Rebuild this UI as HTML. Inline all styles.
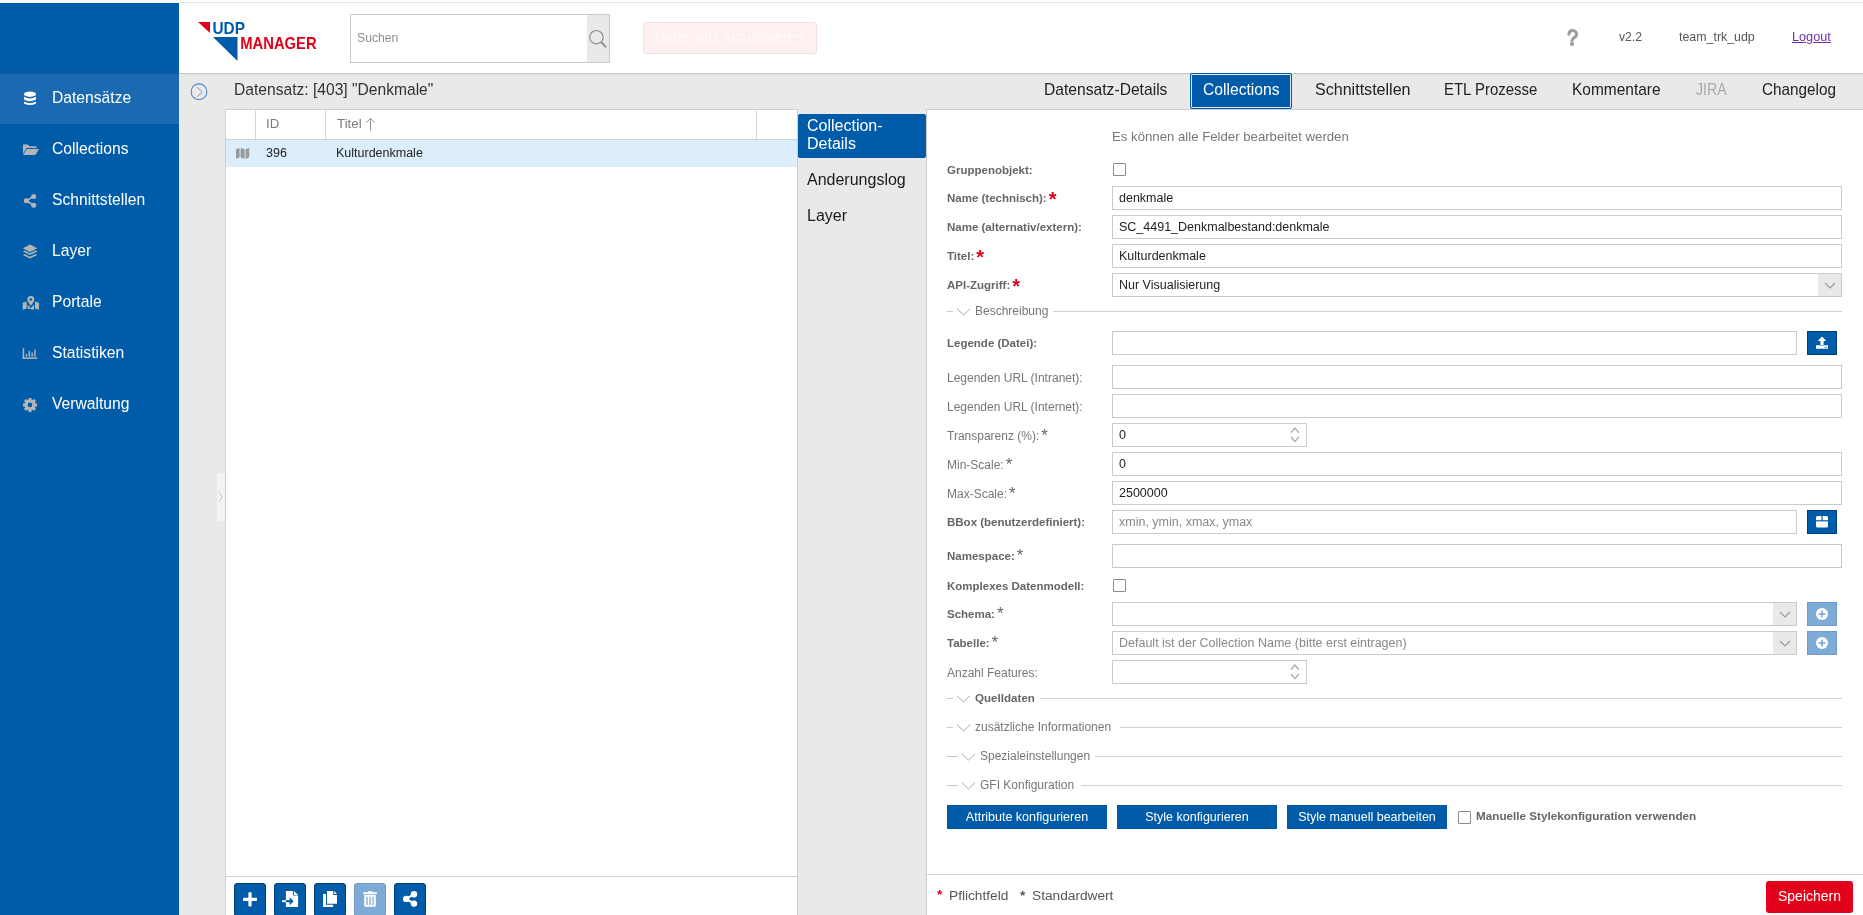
<!DOCTYPE html>
<html><head><meta charset="utf-8">
<style>
*{box-sizing:border-box}
html,body{margin:0;padding:0}
html{background:#fff}body{will-change:transform;width:1863px;height:915px;overflow:hidden;position:relative;background:transparent;font-family:"Liberation Sans",sans-serif;color:#333}
.a{position:absolute}
#topstrip{left:0;top:0;width:1863px;height:2px;background:#fbfbfb}
#topline{left:179px;top:2px;width:1684px;height:1px;background:#e3e3e3}
#sidebar{left:0;top:3px;width:179px;height:912px;background:#005ca9}
.navact{left:0;top:73px;width:179px;height:51px;background:#1b69b0;border-top:1px solid #175c9e}
.nav{left:52px;color:#fff;font-size:17.4px;line-height:20px;transform:scaleX(0.9);transform-origin:0 50%;white-space:nowrap}
.nico{left:22px;width:16px;height:16px}
#header{left:179px;top:3px;width:1684px;height:70px;background:#fff}
#hline{left:179px;top:73px;width:1684px;height:1px;background:#c6c6c6}
#gray{left:179px;top:74px;width:1684px;height:841px;background:#e9e9e9}
#tbl{left:225px;top:109px;width:573px;height:806px;background:#fff;border:1px solid #cfcfcf;border-bottom:none}
#sub{left:798px;top:109px;width:128px;height:806px;background:#e9e9e9}
#form{left:926px;top:109px;width:937px;height:806px;background:#fff;border:1px solid #cfcfcf;border-right:none;border-bottom:none}

.t{position:absolute;white-space:nowrap}
#search{left:350px;top:14px;width:260px;height:49px;border:1px solid #c8c8c8;background:#fff}
#sbtn{left:587px;top:15px;width:22px;height:47px;background:#e9e9e9}
#upd{left:643px;top:22px;width:174px;height:32px;background:#feeff0;border:1px solid #f1e1e3;border-radius:3px}
.tab{font-size:17px;color:#222;top:80px;line-height:20px;transform-origin:0 50%}
#acttab{left:1190px;top:73px;width:102px;height:36px;background:#005ca9;border:1px solid #005ca9;box-shadow:inset 0 0 0 1px #d8e6f3;border-radius:2px}

.th{font-size:13.3px;color:#7c7c7c;top:116px;line-height:16px}
.td{font-size:12.5px;color:#222;top:146px;line-height:15px}
.subi{left:807px;font-size:16px;color:#1a1a1a;line-height:18px}

.lb{font-size:11.5px;font-weight:700;color:#666;line-height:24px;top:0}
.ln{font-size:12px;color:#777;line-height:24px;margin-top:1px}
.sr{color:#e2001a;font-size:20px;font-weight:700;position:relative;top:4px;margin-left:2px;line-height:10px}
.sg{color:#666;font-size:17px;font-weight:400;position:relative;top:1px;margin-left:2px;line-height:10px}
.it{font-size:12.5px;color:#222;line-height:24px}
.ph{color:#888}
.info{font-size:13.2px;color:#777;line-height:16px}
.sec{font-size:12px;color:#777;line-height:16px}
.secb{font-weight:700;font-size:11.6px;color:#666}
.btn{width:160px;height:24px;background:#005ca9;color:#fff;font-size:12.5px;line-height:24px;text-align:center;white-space:nowrap}
.foot{font-size:13.7px;color:#555;line-height:18px}
.tb{top:883px;width:32px;height:34px;background:#005ca9;border-radius:3px;border:1px solid #003f7e}
</style></head>
<body>
<div class="a" id="topstrip"></div>
<div class="a" id="topline"></div>
<div class="a" id="sidebar"></div>
<div class="a navact"></div>
<div class="a nav" style="top:87px">Datensätze</div>
<div class="a nav" style="top:138px">Collections</div>
<div class="a nav" style="top:189px">Schnittstellen</div>
<div class="a nav" style="top:240px">Layer</div>
<div class="a nav" style="top:291px">Portale</div>
<div class="a nav" style="top:342px">Statistiken</div>
<div class="a nav" style="top:393px">Verwaltung</div>

<!--ICONS-->
<svg class="a" style="left:0;top:0" width="179" height="420">
<g fill="#fff">
<ellipse cx="30" cy="94.2" rx="6" ry="2.7"/>
<path d="M24,96.8 Q30,100.2 36,96.8 L36,99.6 Q30,103 24,99.6 Z"/>
<path d="M24,101.6 Q30,105 36,101.6 L36,103.4 Q30,106.8 24,103.4 Z"/>
</g>
<g fill="#b5b5b5">
<path d="M23,144.5 L27.8,144.5 L29.3,146.2 L36.5,146.2 L36.5,148 L26.5,148 L23,154 Z"/>
<path d="M26.8,149 L39,149 L35.4,155 L23.2,155 Z"/>
<circle cx="33.7" cy="196.4" r="2.5"/><circle cx="26.3" cy="200.8" r="2.5"/><circle cx="33.7" cy="205.3" r="2.5"/>
<path d="M33.7,196.4 L26.3,200.8 L33.7,205.3" fill="none" stroke="#b5b5b5" stroke-width="1.6"/>
<path d="M30,244.4 L37.3,248.2 L30,252 L22.8,248.2 Z"/>
<path d="M22.8,251.4 L24.6,250.5 L30,253.3 L35.5,250.5 L37.3,251.4 L30,255.1 Z"/>
<path d="M22.8,254.9 L24.6,254 L30,256.8 L35.5,254 L37.3,254.9 L30,258.6 Z"/>
<path d="M22.7,302.8 L26.6,301.4 L26.6,308.5 L22.7,309.8 Z"/>
<path d="M27.6,304.6 L30.8,308.2 L34,304.6 L34,309.8 L27.6,308.5 Z"/>
<path d="M35,301.4 L39,302.8 L39,309.8 L35,308.5 Z"/>
<path d="M30.8,296 A3.5,3.5 0 0 1 34.3,299.5 C34.3,301.6 31.8,304.2 30.8,306 C29.8,304.2 27.3,301.6 27.3,299.5 A3.5,3.5 0 0 1 30.8,296 Z"/>
<rect x="22.7" y="348.2" width="1.5" height="10.7"/><rect x="22.7" y="357.4" width="14.5" height="1.5"/>
<rect x="25.8" y="354" width="1.5" height="2.6"/><rect x="28.6" y="350.8" width="1.5" height="5.8"/><rect x="31.4" y="352.6" width="1.5" height="4"/><rect x="34.2" y="349.6" width="1.5" height="7"/>
<g transform="translate(30,404.9)">
<circle r="5.3"/>
<rect x="-1.6" y="-7" width="3.2" height="14" rx="0.6"/>
<rect x="-1.6" y="-7" width="3.2" height="14" rx="0.6" transform="rotate(45)"/>
<rect x="-1.6" y="-7" width="3.2" height="14" rx="0.6" transform="rotate(90)"/>
<rect x="-1.6" y="-7" width="3.2" height="14" rx="0.6" transform="rotate(135)"/>
</g>
</g>
<circle cx="30.8" cy="299.5" r="1.3" fill="#005ca9"/>
<circle cx="30" cy="404.9" r="2.3" fill="#005ca9"/>
</svg>

<!--/ICONS-->
<div class="a" id="header"></div>
<div class="a" id="hline"></div>
<div class="a" id="gray"></div>
<div class="a" style="left:179px;top:74px;width:1684px;height:2px;background:linear-gradient(#e2e2e2,#e8e8e8)"></div>

<svg class="a" style="left:0;top:0" width="330" height="70">
<polygon points="198,22 210,22 210,33" fill="#e2001a"/>
<polygon points="213,37 237.5,37 237.5,61" fill="#005ca9"/>
<text x="212.5" y="34.3" font-family="Liberation Sans" font-weight="700" font-size="16.6" fill="#005ca9" textLength="32.5" lengthAdjust="spacingAndGlyphs">UDP</text>
<text x="240.2" y="49.3" font-family="Liberation Sans" font-weight="700" font-size="16.6" fill="#e2001a" textLength="76.5" lengthAdjust="spacingAndGlyphs">MANAGER</text>
</svg>
<div class="a" id="search"></div>
<div class="a" id="sbtn"></div>
<svg class="a" style="left:585px;top:26px" width="26" height="26"><circle cx="11.4" cy="11.2" r="6.7" fill="none" stroke="#8e8e8e" stroke-width="1.2"/><line x1="16.2" y1="16" x2="21.2" y2="21.3" stroke="#8e8e8e" stroke-width="1.9"/></svg>
<div class="t" style="left:357px;top:31px;font-size:12.2px;color:#8f8f8f;line-height:14px">Suchen</div>
<div class="a" id="upd"></div>
<div class="t" style="left:655px;top:29px;font-size:14.3px;color:#fffafa;line-height:16px">Datensatz aktualisieren</div>
<svg class="a" style="left:1564px;top:28px" width="16" height="20"><path d="M4.8,6.2 C5.2,3.6 6.8,2.4 8.4,2.4 C11,2.4 12.6,4.2 12.6,6.2 C12.6,9.3 8.4,9.6 8,12.6" fill="none" stroke="#9c9c9c" stroke-width="3" stroke-linecap="round"/><circle cx="8" cy="16" r="2.1" fill="#9c9c9c"/></svg>
<div class="t" style="left:1619px;top:30px;font-size:12.2px;color:#555;line-height:14px">v2.2</div>
<div class="t" style="left:1679px;top:30px;font-size:12.4px;color:#555;line-height:14px">team_trk_udp</div>
<div class="t" style="left:1792px;top:30px;font-size:12.7px;color:#6b2fa6;line-height:14px;text-decoration:underline">Logout</div>

<svg class="a" style="left:189px;top:82px" width="20" height="20"><circle cx="10" cy="9.8" r="7.9" fill="none" stroke="#4f89c4" stroke-width="1.1"/><polyline points="8.2,5.2 13.3,10 8.2,14.7" fill="none" stroke="#6a8fd8" stroke-width="0.9"/></svg>
<div class="t" style="left:234px;top:80px;font-size:16.8px;color:#333;line-height:20px;transform:scaleX(0.93);transform-origin:0 50%">Datensatz: [403] "Denkmale"</div>
<div class="t tab" style="left:1044px;transform:scaleX(0.92)">Datensatz-Details</div>
<div class="a" id="acttab"></div>
<div class="t tab" style="left:1203px;color:#fff;transform:scaleX(0.92)">Collections</div>
<div class="t tab" style="left:1315px;transform:scaleX(0.945)">Schnittstellen</div>
<div class="t tab" style="left:1444px;transform:scaleX(0.88)">ETL Prozesse</div>
<div class="t tab" style="left:1572px;transform:scaleX(0.91)">Kommentare</div>
<div class="t tab" style="left:1696px;color:#aaa;transform:scaleX(0.83)">JIRA</div>
<div class="t tab" style="left:1762px;transform:scaleX(0.9)">Changelog</div>
<div class="a" id="tbl"></div>
<div class="a" style="left:226px;top:139px;width:571px;height:1px;background:#d0d0d0"></div>
<div class="a" style="left:255px;top:110px;width:1px;height:29px;background:#d8d8d8"></div>
<div class="a" style="left:325px;top:110px;width:1px;height:29px;background:#d8d8d8"></div>
<div class="a" style="left:756px;top:110px;width:1px;height:29px;background:#d8d8d8"></div>
<div class="t th" style="left:266px">ID</div>
<div class="t th" style="left:337px">Titel</div>
<svg class="a" style="left:364px;top:115px" width="12" height="18"><line x1="6.5" y1="3.5" x2="6.5" y2="15.5" stroke="#8a8a8a" stroke-width="0.9"/><polyline points="2.2,7.8 6.5,3.3 10.8,7.8" fill="none" stroke="#8a8a8a" stroke-width="0.9"/></svg>
<div class="a" style="left:226px;top:140px;width:571px;height:27px;background:#dcedfc"></div>
<svg class="a" style="left:235px;top:147px" width="16" height="13"><path d="M1,2.2 L4.6,1 L4.6,10.6 L1,11.8 Z M5.6,1 L9.6,2.2 L9.6,11.8 L5.6,10.6 Z M10.6,2.2 L14.2,1 L14.2,10.6 L10.6,11.8 Z" fill="#9a9a9a"/></svg>
<div class="t td" style="left:266px">396</div>
<div class="t td" style="left:336px">Kulturdenkmale</div>
<div class="a" style="left:226px;top:876px;width:571px;height:1px;background:#d0d0d0"></div>

<!--TOOL-->
<div class="a" style="left:217px;top:473px;width:8px;height:48px;background:#f3f3f3"></div>
<svg class="a" style="left:217px;top:490px" width="8" height="14"><polyline points="2,2.5 5.5,7 2,11.5" fill="none" stroke="#c8c8c8" stroke-width="1"/></svg>
<div class="a tb" style="left:234px"></div>
<div class="a tb" style="left:274px"></div>
<div class="a tb" style="left:314px"></div>
<div class="a tb" style="left:354px;background:#7eaad6;border-color:#6e9bcb"></div>
<div class="a tb" style="left:394px"></div>
<svg class="a" style="left:226px;top:876px" width="220" height="39">
<g fill="#fff">
<rect x="17" y="21.8" width="14" height="3.2" rx="0.8"/><rect x="22.4" y="16.2" width="3.2" height="14.2" rx="0.8"/>
<path d="M59.9,14.9 H66.9 V19.5 H72.1 V31 H59.9 Z"/>
<path d="M67.9,14.9 L72.1,18.9 H67.9 Z"/>
<rect x="56" y="24.2" width="4" height="2"/>
</g>
<g fill="#005ca9">
<rect x="59.9" y="24.2" width="4.2" height="2"/>
<path d="M63.6,21.2 L67.6,25.2 L63.6,29.2 Z"/>
</g>
<g fill="#fff">
<path d="M101,14.9 H107.2 V19 H111 V27.8 H101 Z"/>
<path d="M108.1,14.9 L111,18 H108.1 Z"/>
<path d="M97,18 H100 V28.8 H107.1 V31 H97 Z"/>
<rect x="136.9" y="16.2" width="14.2" height="1.9" rx="0.8"/><rect x="141.8" y="15.2" width="4.6" height="1.6" rx="0.6"/>
<path d="M138.2,18.8 H149.8 V29.6 Q149.8,30.8 148.6,30.8 H139.4 Q138.2,30.8 138.2,29.6 Z"/>
<circle cx="188" cy="18.2" r="3.2"/><circle cx="180.2" cy="22.9" r="3.2"/><circle cx="188" cy="27.6" r="3.2"/>
<path d="M188,18.2 L180.2,22.9 L188,27.6" fill="none" stroke="#fff" stroke-width="2"/>
</g>
<g fill="#7eaad6"><rect x="140.4" y="20.8" width="1.3" height="8.2"/><rect x="143.4" y="20.8" width="1.3" height="8.2"/><rect x="146.4" y="20.8" width="1.3" height="8.2"/></g>
</svg>

<!--/TOOL-->
<div class="a" id="sub"></div>

<div class="a" style="left:798px;top:114px;width:128px;height:44px;background:#005ca9;border-radius:2px"></div>
<div class="t subi" style="top:117px;color:#fff">Collection-</div>
<div class="t subi" style="top:135px;color:#fff">Details</div>
<div class="t subi" style="top:171px">Anderungslog</div>
<div class="t subi" style="top:207px">Layer</div>

<div class="a" id="form"></div>
<!--FORM-->
<div class="t info" style="left:1112px;top:129px;">Es können alle Felder bearbeitet werden</div>
<div class="t lb" style="left:947px;top:158px;">Gruppenobjekt:</div>
<div class="a" style="left:1113px;top:163px;width:13px;height:13px;border:1px solid #8a8a8a;background:#fff;border-radius:1px"></div>
<div class="t lb" style="left:947px;top:186px;">Name (technisch):<span class="sr">*</span></div>
<div class="a" style="left:1112px;top:186px;width:730px;height:24px;border:1px solid #cbcbcb;background:#fff"></div>
<div class="t it" style="left:1119px;top:186px;">denkmale</div>
<div class="t lb" style="left:947px;top:215px;">Name (alternativ/extern):</div>
<div class="a" style="left:1112px;top:215px;width:730px;height:24px;border:1px solid #cbcbcb;background:#fff"></div>
<div class="t it" style="left:1119px;top:215px;">SC_4491_Denkmalbestand:denkmale</div>
<div class="t lb" style="left:947px;top:244px;">Titel:<span class="sr">*</span></div>
<div class="a" style="left:1112px;top:244px;width:730px;height:24px;border:1px solid #cbcbcb;background:#fff"></div>
<div class="t it" style="left:1119px;top:244px;">Kulturdenkmale</div>
<div class="t lb" style="left:947px;top:273px;">API-Zugriff:<span class="sr">*</span></div>
<div class="a" style="left:1112px;top:273px;width:730px;height:24px;border:1px solid #cbcbcb;background:#fff"></div>
<div class="t it" style="left:1119px;top:273px;">Nur Visualisierung</div>
<div class="a" style="left:1818px;top:274px;width:23px;height:22px;background:#e9e9e9"></div>
<svg class="a" style="left:1822.5px;top:278px" width="14" height="14"><polyline points="2,5 7,10 12,5" fill="none" stroke="#999" stroke-width="1.1"/></svg>
<div class="a" style="left:947px;top:311px;width:6px;height:1px;background:#c9c9c9"></div>
<svg class="a" style="left:956px;top:306px" width="16" height="10"><polyline points="1,2.7 7.5,9 14,2.7" fill="none" stroke="#a8a8a8" stroke-width="1"/></svg>
<div class="t sec" style="left:975px;top:303px;">Beschreibung</div>
<div class="a" style="left:1053px;top:311px;width:789px;height:1px;background:#d2d2d2"></div>
<div class="t lb" style="left:947px;top:331px;">Legende (Datei):</div>
<div class="a" style="left:1112px;top:331px;width:685px;height:24px;border:1px solid #cbcbcb;background:#fff"></div>
<div class="a" style="left:1807px;top:331px;width:30px;height:24px;background:#005ca9;border:1px solid #003f7e"></div>
<svg class="a" style="left:1807px;top:331px" width="30" height="24"><path d="M15,5.5 L10.8,10 L13.4,10 L13.4,14.5 L16.6,14.5 L16.6,10 L19.2,10 Z" fill="#fff"/><path d="M9,14.2 L13,14.2 Q15,16 17,14.2 L21,14.2 L21,17.8 L9,17.8 Z" fill="#fff"/><rect x="17.5" y="16" width="1" height="1" fill="#5b8fc8"/><rect x="19" y="16" width="1" height="1" fill="#5b8fc8"/></svg>
<div class="t ln" style="left:947px;top:365px;">Legenden URL (Intranet):</div>
<div class="a" style="left:1112px;top:365px;width:730px;height:24px;border:1px solid #cbcbcb;background:#fff"></div>
<div class="t ln" style="left:947px;top:394px;">Legenden URL (Internet):</div>
<div class="a" style="left:1112px;top:394px;width:730px;height:24px;border:1px solid #cbcbcb;background:#fff"></div>
<div class="t ln" style="left:947px;top:423px;">Transparenz (%):<span class="sg">*</span></div>
<div class="a" style="left:1112px;top:423px;width:195px;height:24px;border:1px solid #cbcbcb;background:#fff"></div>
<div class="t it" style="left:1119px;top:423px;">0</div>
<svg class="a" style="left:1288px;top:425px" width="14" height="20"><polyline points="3,7.7 6.9,3.1 10.8,7.7" fill="none" stroke="#a8a8a8" stroke-width="1.3"/><polyline points="3,12 6.9,16.6 10.8,12" fill="none" stroke="#a8a8a8" stroke-width="1.3"/></svg>
<div class="t ln" style="left:947px;top:452px;">Min-Scale:<span class="sg">*</span></div>
<div class="a" style="left:1112px;top:452px;width:730px;height:24px;border:1px solid #cbcbcb;background:#fff"></div>
<div class="t it" style="left:1119px;top:452px;">0</div>
<div class="t ln" style="left:947px;top:481px;">Max-Scale:<span class="sg">*</span></div>
<div class="a" style="left:1112px;top:481px;width:730px;height:24px;border:1px solid #cbcbcb;background:#fff"></div>
<div class="t it" style="left:1119px;top:481px;">2500000</div>
<div class="t lb" style="left:947px;top:510px;">BBox (benutzerdefiniert):</div>
<div class="a" style="left:1112px;top:510px;width:685px;height:24px;border:1px solid #cbcbcb;background:#fff"></div>
<div class="t it ph" style="left:1119px;top:510px;">xmin, ymin, xmax, ymax</div>
<div class="a" style="left:1807px;top:510px;width:30px;height:24px;background:#005ca9;border:1px solid #003f7e"></div>
<svg class="a" style="left:1807px;top:510px" width="30" height="24"><rect x="9" y="6" width="12" height="11.5" rx="1.5" fill="#fff"/><rect x="9" y="10.2" width="12" height="1.2" fill="#005ca9"/><rect x="14.4" y="5.5" width="1.2" height="4.8" fill="#005ca9"/></svg>
<div class="t lb" style="left:947px;top:544px;">Namespace:<span class="sg">*</span></div>
<div class="a" style="left:1112px;top:544px;width:730px;height:24px;border:1px solid #cbcbcb;background:#fff"></div>
<div class="t lb" style="left:947px;top:574px;">Komplexes Datenmodell:</div>
<div class="a" style="left:1113px;top:579px;width:13px;height:13px;border:1px solid #8a8a8a;background:#fff;border-radius:1px"></div>
<div class="t lb" style="left:947px;top:602px;">Schema:<span class="sg">*</span></div>
<div class="a" style="left:1112px;top:602px;width:685px;height:24px;border:1px solid #cbcbcb;background:#fff"></div>
<div class="a" style="left:1773px;top:603px;width:23px;height:22px;background:#e9e9e9"></div>
<svg class="a" style="left:1777.5px;top:607px" width="14" height="14"><polyline points="2,5 7,10 12,5" fill="none" stroke="#999" stroke-width="1.1"/></svg>
<div class="a" style="left:1807px;top:602px;width:30px;height:24px;background:#7eaad6;border:1px solid #6e9bcb"></div>
<svg class="a" style="left:1807px;top:602px" width="30" height="24"><circle cx="15" cy="12" r="6" fill="#fff"/><rect x="11.6" y="11.2" width="6.8" height="1.7" fill="#7eaad6"/><rect x="14.15" y="8.6" width="1.7" height="6.8" fill="#7eaad6"/></svg>
<div class="t lb" style="left:947px;top:631px;">Tabelle:<span class="sg">*</span></div>
<div class="a" style="left:1112px;top:631px;width:685px;height:24px;border:1px solid #cbcbcb;background:#fff"></div>
<div class="t it ph" style="left:1119px;top:631px;">Default ist der Collection Name (bitte erst eintragen)</div>
<div class="a" style="left:1773px;top:632px;width:23px;height:22px;background:#e9e9e9"></div>
<svg class="a" style="left:1777.5px;top:636px" width="14" height="14"><polyline points="2,5 7,10 12,5" fill="none" stroke="#999" stroke-width="1.1"/></svg>
<div class="a" style="left:1807px;top:631px;width:30px;height:24px;background:#7eaad6;border:1px solid #6e9bcb"></div>
<svg class="a" style="left:1807px;top:631px" width="30" height="24"><circle cx="15" cy="12" r="6" fill="#fff"/><rect x="11.6" y="11.2" width="6.8" height="1.7" fill="#7eaad6"/><rect x="14.15" y="8.6" width="1.7" height="6.8" fill="#7eaad6"/></svg>
<div class="t ln" style="left:947px;top:660px;">Anzahl Features:</div>
<div class="a" style="left:1112px;top:660px;width:195px;height:24px;border:1px solid #cbcbcb;background:#fff"></div>
<svg class="a" style="left:1288px;top:662px" width="14" height="20"><polyline points="3,7.7 6.9,3.1 10.8,7.7" fill="none" stroke="#a8a8a8" stroke-width="1.3"/><polyline points="3,12 6.9,16.6 10.8,12" fill="none" stroke="#a8a8a8" stroke-width="1.3"/></svg>
<div class="a" style="left:947px;top:698px;width:6px;height:1px;background:#c9c9c9"></div>
<svg class="a" style="left:956px;top:693px" width="16" height="10"><polyline points="1,2.7 7.5,9 14,2.7" fill="none" stroke="#a8a8a8" stroke-width="1"/></svg>
<div class="t sec secb" style="left:975px;top:690px;">Quelldaten</div>
<div class="a" style="left:1040px;top:698px;width:802px;height:1px;background:#d2d2d2"></div>
<div class="a" style="left:947px;top:727px;width:6px;height:1px;background:#c9c9c9"></div>
<svg class="a" style="left:956px;top:722px" width="16" height="10"><polyline points="1,2.7 7.5,9 14,2.7" fill="none" stroke="#a8a8a8" stroke-width="1"/></svg>
<div class="t sec" style="left:975px;top:719px;">zusätzliche Informationen</div>
<div class="a" style="left:1120px;top:727px;width:722px;height:1px;background:#d2d2d2"></div>
<div class="a" style="left:947px;top:756px;width:11px;height:1px;background:#c9c9c9"></div>
<svg class="a" style="left:961px;top:751px" width="16" height="10"><polyline points="1,2.7 7.5,9 14,2.7" fill="none" stroke="#a8a8a8" stroke-width="1"/></svg>
<div class="t sec" style="left:980px;top:748px;">Spezialeinstellungen</div>
<div class="a" style="left:1095px;top:756px;width:747px;height:1px;background:#d2d2d2"></div>
<div class="a" style="left:947px;top:785px;width:11px;height:1px;background:#c9c9c9"></div>
<svg class="a" style="left:961px;top:780px" width="16" height="10"><polyline points="1,2.7 7.5,9 14,2.7" fill="none" stroke="#a8a8a8" stroke-width="1"/></svg>
<div class="t sec" style="left:980px;top:777px;">GFI Konfiguration</div>
<div class="a" style="left:1081px;top:785px;width:761px;height:1px;background:#d2d2d2"></div>
<div class="a btn" style="left:947px;top:805px">Attribute konfigurieren</div>
<div class="a btn" style="left:1117px;top:805px">Style konfigurieren</div>
<div class="a btn" style="left:1287px;top:805px">Style manuell bearbeiten</div>
<div class="a" style="left:1458px;top:811px;width:13px;height:13px;border:1px solid #8a8a8a;background:#fff;border-radius:1px"></div>
<div class="t lb" style="left:1476px;top:807px;line-height:18px;font-size:11.7px">Manuelle Stylekonfiguration verwenden</div>
<div class="a" style="left:927px;top:874px;width:936px;height:1px;background:#d0d0d0"></div>
<div class="t foot" style="left:937px;top:886px;font-weight:700"><span style="color:#e2001a">*</span></div>
<div class="t foot" style="left:949px;top:887px;">Pflichtfeld</div>
<div class="t foot" style="left:1020px;top:887px;font-weight:700">*</div>
<div class="t foot" style="left:1032px;top:887px;">Standardwert</div>
<div class="a" style="left:1766px;top:881px;width:87px;height:32px;background:#e2001a;border-radius:3px;color:#fff;font-size:14px;line-height:31px;text-align:center">Speichern</div>
<!--/FORM-->
</body></html>
